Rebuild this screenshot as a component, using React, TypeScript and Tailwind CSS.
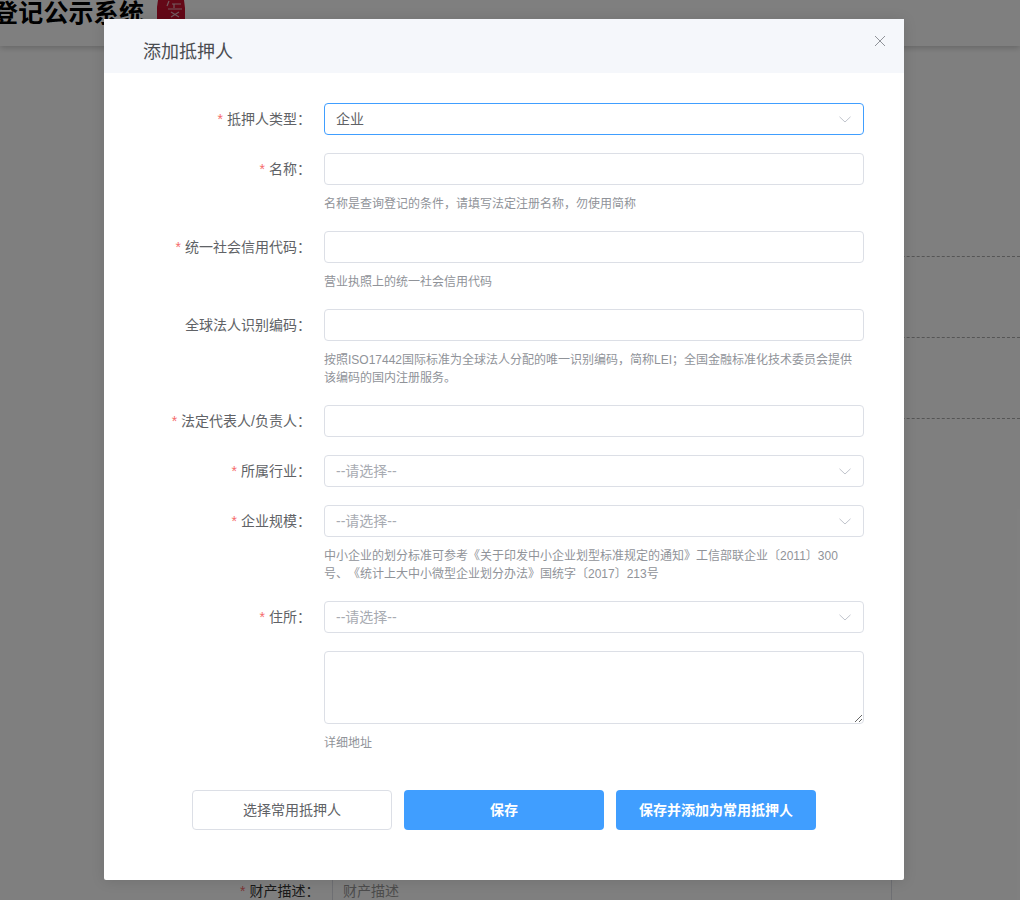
const FONT = "font-['Liberation_Sans','Noto_Sans_CJK_SC',sans-serif]";

function Chevron() {
  return (
    <svg width="12" height="7" viewBox="0 0 12 7" fill="none" className="shrink-0">
      <polyline points="0.5,0.8 6,6 11.5,0.8" stroke="#c0c4cc" strokeWidth="1" />
    </svg>
  );
}

function Label({ text, required = true }: { text: string; required?: boolean }) {
  return (
    <div className="w-[207px] h-8 leading-[32px] text-right text-sm text-[#606266] shrink-0">
      {required && <span className="text-[#f56c6c] mr-1">*</span>}
      {text}：
    </div>
  );
}

function Select({ value, placeholder, focused }: { value?: string; placeholder?: string; focused?: boolean }) {
  return (
    <div
      className={
        focused
          ? "w-[540px] h-8 box-border border border-[#409eff] rounded flex items-center justify-between pl-[11px] pr-[12px] text-sm text-[#606266]"
          : "w-[540px] h-8 box-border border border-[#dcdfe6] rounded flex items-center justify-between pl-[11px] pr-[12px] text-sm text-[#a8abb2]"
      }
    >
      <span>{value ?? placeholder}</span>
      <Chevron />
    </div>
  );
}

function Input() {
  return <input className="w-[540px] h-8 box-border border border-[#dcdfe6] rounded outline-none bg-white" />;
}

function Hint({ children }: { children: React.ReactNode }) {
  return <div className="w-[530px] mt-[10px] text-xs leading-[18px] text-[#909399] [text-spacing-trim:space-all]">{children}</div>;
}

function Row({ label, required, children, hint }: { label: string; required?: boolean; children: React.ReactNode; hint?: React.ReactNode }) {
  return (
    <div className="flex mb-[18px]">
      <Label text={label} required={required} />
      <div className="ml-[13px] w-[540px]">
        {children}
        {hint && <Hint>{hint}</Hint>}
      </div>
    </div>
  );
}

function BackgroundPage() {
  return (
    <div className="h-[900px] flex flex-col">
      <div className="h-[46px] shrink-0 bg-white shadow-[0_2px_6px_rgba(0,0,0,0.2)] flex items-start overflow-hidden">
        <div className="ml-[-7px] mt-[-4px] flex items-start">
          <span className="text-[25px] leading-[36px] font-bold text-black tracking-[0.2px] font-['Liberation_Serif','Noto_Sans_CJK_SC',serif]">登记公示系统</span>
          <svg width="29" height="30" viewBox="0 0 29 30" className="ml-[13px] mt-[4px]">
            <path d="M1 0H27L28 8V26L24 30H4L0 26V7Z" fill="#c8102e" />
            <path d="M12 1L10 6M15 4H24M17 4V8M11 9H25M14 12L22 17M22 12L14 17" stroke="#e8b6bf" strokeWidth="1.2" fill="none" />
          </svg>
        </div>
      </div>
      <div className="ml-[400px] mt-[210px] border-t border-dashed border-[#aaa] h-[81px]" />
      <div className="ml-[400px] border-t border-dashed border-[#aaa] h-[81px]" />
      <div className="ml-[400px] border-t border-dashed border-[#aaa] h-[81px]" />
      <div className="flex-1 flex flex-col justify-end">
        <div className="flex ml-[240px] w-[652px] h-[20px] text-sm">
          <div className="w-[92px] leading-[22px] text-[#333]">
            <span className="text-[#f56c6c] mr-1">*</span>财产描述：
          </div>
          <div className="flex-1 border-l border-r border-[#dcdfe6] pl-[10px] leading-[22px] text-[#999]">财产描述</div>
        </div>
      </div>
    </div>
  );
}

export default function App() {
  return (
    <div className={`relative h-[900px] overflow-hidden bg-white ${FONT}`}>
      <BackgroundPage />
      <div className="absolute inset-0 bg-black/50" />
      <div className="absolute left-[104px] top-[19px] w-[800px] h-[861px] bg-white rounded-b-[2px] shadow-[0_1px_14px_rgba(0,0,0,0.12)]">
        <div className="h-[54px] bg-[#f5f7fb] flex items-center justify-between pl-[39px] pr-[18px]">
          <span className="text-lg text-[#4a4c50] relative top-[6px]">添加抵押人</span>
          <svg width="12" height="12" viewBox="0 0 12 12" className="mb-[10px]">
            <path d="M1 1L11 11M11 1L1 11" stroke="#909399" strokeWidth="1" />
          </svg>
        </div>
        <div className="pt-[30px]">
          <Row label="抵押人类型"><Select value="企业" focused /></Row>
          <Row label="名称" hint="名称是查询登记的条件，请填写法定注册名称，勿使用简称"><Input /></Row>
          <Row label="统一社会信用代码" hint="营业执照上的统一社会信用代码"><Input /></Row>
          <Row label="全球法人识别编码" required={false} hint="按照ISO17442国际标准为全球法人分配的唯一识别编码，简称LEI；全国金融标准化技术委员会提供该编码的国内注册服务。"><Input /></Row>
          <Row label="法定代表人/负责人"><Input /></Row>
          <Row label="所属行业"><Select placeholder="--请选择--" /></Row>
          <Row label="企业规模" hint="中小企业的划分标准可参考《关于印发中小企业划型标准规定的通知》工信部联企业〔2011〕300号、《统计上大中小微型企业划分办法》国统字〔2017〕213号"><Select placeholder="--请选择--" /></Row>
          <Row label="住所"><Select placeholder="--请选择--" /></Row>
          <div className="flex">
            <div className="w-[207px] shrink-0" />
            <div className="ml-[13px] w-[540px]">
              <textarea className="block w-[540px] h-[73px] box-border border border-[#dcdfe6] rounded outline-none resize-y bg-white" />
              <Hint>详细地址</Hint>
            </div>
          </div>
          <div className="flex justify-center gap-3 mt-[38px]">
            <button className="w-[200px] h-10 box-border border border-[#dcdfe6] rounded bg-white text-sm text-[#606266]">选择常用抵押人</button>
            <button className="w-[200px] h-10 rounded bg-[#409eff] text-sm font-bold text-white">保存</button>
            <button className="w-[200px] h-10 rounded bg-[#409eff] text-sm font-bold text-white">保存并添加为常用抵押人</button>
          </div>
        </div>
      </div>
    </div>
  );
}
